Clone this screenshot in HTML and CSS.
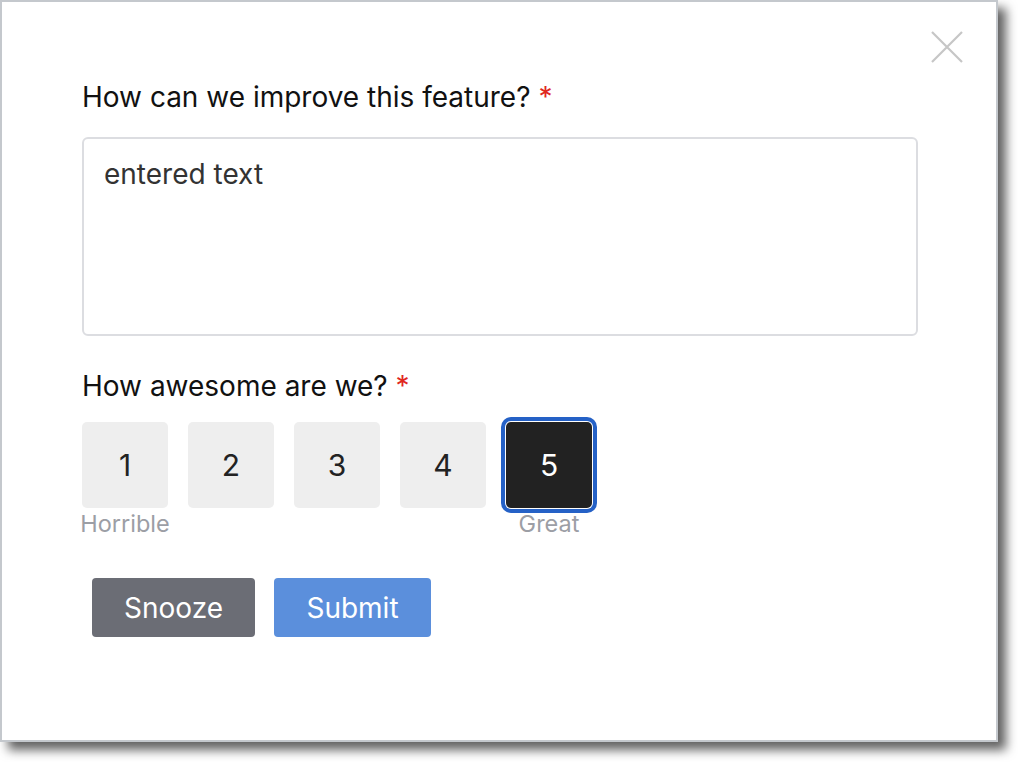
FILE: index.html
```html
<!DOCTYPE html>
<html lang="en">
<head>
<meta charset="utf-8">
<title>Feedback</title>
<link rel="stylesheet" href="styles.css">
</head>
<body>
<div class="page">
<div class="dialog">
  <button class="close" aria-label="Close">
    <svg width="32" height="32" viewBox="0 0 32 32"><path d="M1 1 L31 31 M31 1 L1 31" stroke="#c6c6c6" stroke-width="2.2" fill="none"/></svg>
  </button>
  <form class="form">
    <label class="label">How can we improve this feature? <span class="req">*</span></label>
    <div class="textarea">entered text</div>
    <label class="label label-rating">How awesome are we? <span class="req">*</span></label>
    <div class="rating">
      <div class="opt"><div class="box">1</div><div class="cap">Horrible</div></div>
      <div class="opt"><div class="box">2</div><div class="cap"></div></div>
      <div class="opt"><div class="box">3</div><div class="cap"></div></div>
      <div class="opt"><div class="box">4</div><div class="cap"></div></div>
      <div class="opt"><div class="box selected">5</div><div class="cap">Great</div></div>
    </div>
    <div class="actions">
      <button type="button" class="btn snooze">Snooze</button>
      <button type="button" class="btn submit">Submit</button>
    </div>
  </form>
</div>
</div>
</body>
</html>
```
FILE: styles.css
```css
* { box-sizing: border-box; }
html, body { margin: 0; padding: 0; background: #fff; }
body { font-family: Inter, "Noto Sans", sans-serif; color: #111; }
.page { padding: 0 20px 20px 0; width: 1018px; height: 762px; }
.dialog {
  position: relative;
  width: 998px;
  height: 742px;
  border: 2px solid #c4c8cd;
  background: #fff;
  box-shadow: 8px 8px 10px rgba(0,0,0,0.62);
  padding: 78px 78px 0 80px;
}
.close {
  position: absolute;
  top: 29px;
  left: 929px;
  width: 32px;
  height: 32px;
  padding: 0;
  border: 0;
  background: none;
  display: block;
}
.close svg { display: block; }
.form { display: flex; flex-direction: column; }
.label { font-size: 28px; line-height: 34px; color: #111; }
.req { color: #e0281e; }
.textarea {
  margin-top: 23px;
  height: 199px;
  border: 2px solid #dcdde1;
  border-radius: 6px;
  padding: 18px 20px 16px;
  font-size: 28px;
  line-height: 34px;
  color: #333;
}
.label-rating { margin-top: 33px; }
.rating { display: flex; gap: 20px; margin-top: 19px; }
.opt { display: flex; flex-direction: column; align-items: center; width: 86px; }
.box {
  width: 86px;
  height: 86px;
  border-radius: 5px;
  background: #eeeeee;
  color: #222;
  font-size: 30px;
  display: flex;
  align-items: center;
  justify-content: center;
}
.box.selected {
  background: #222222;
  color: #fff;
  box-shadow: 0 0 0 1px #fff, 0 0 0 5px #2561c6;
}
.cap {
  margin-top: 2px;
  height: 28px;
  font-size: 23.5px;
  line-height: 28px;
  color: #9c9ea5;
  white-space: nowrap;
}
.actions { display: flex; gap: 19px; margin-top: 40px; padding-left: 10px; }
.btn {
  font-family: inherit;
  font-size: 28px;
  line-height: 34px;
  height: 59px;
  border: 0;
  border-radius: 4px;
  color: #fff;
  padding: 0;
}
.snooze { background: #6b6d75; width: 163px; }
.submit { background: #5b8fdc; width: 157px; }
```
